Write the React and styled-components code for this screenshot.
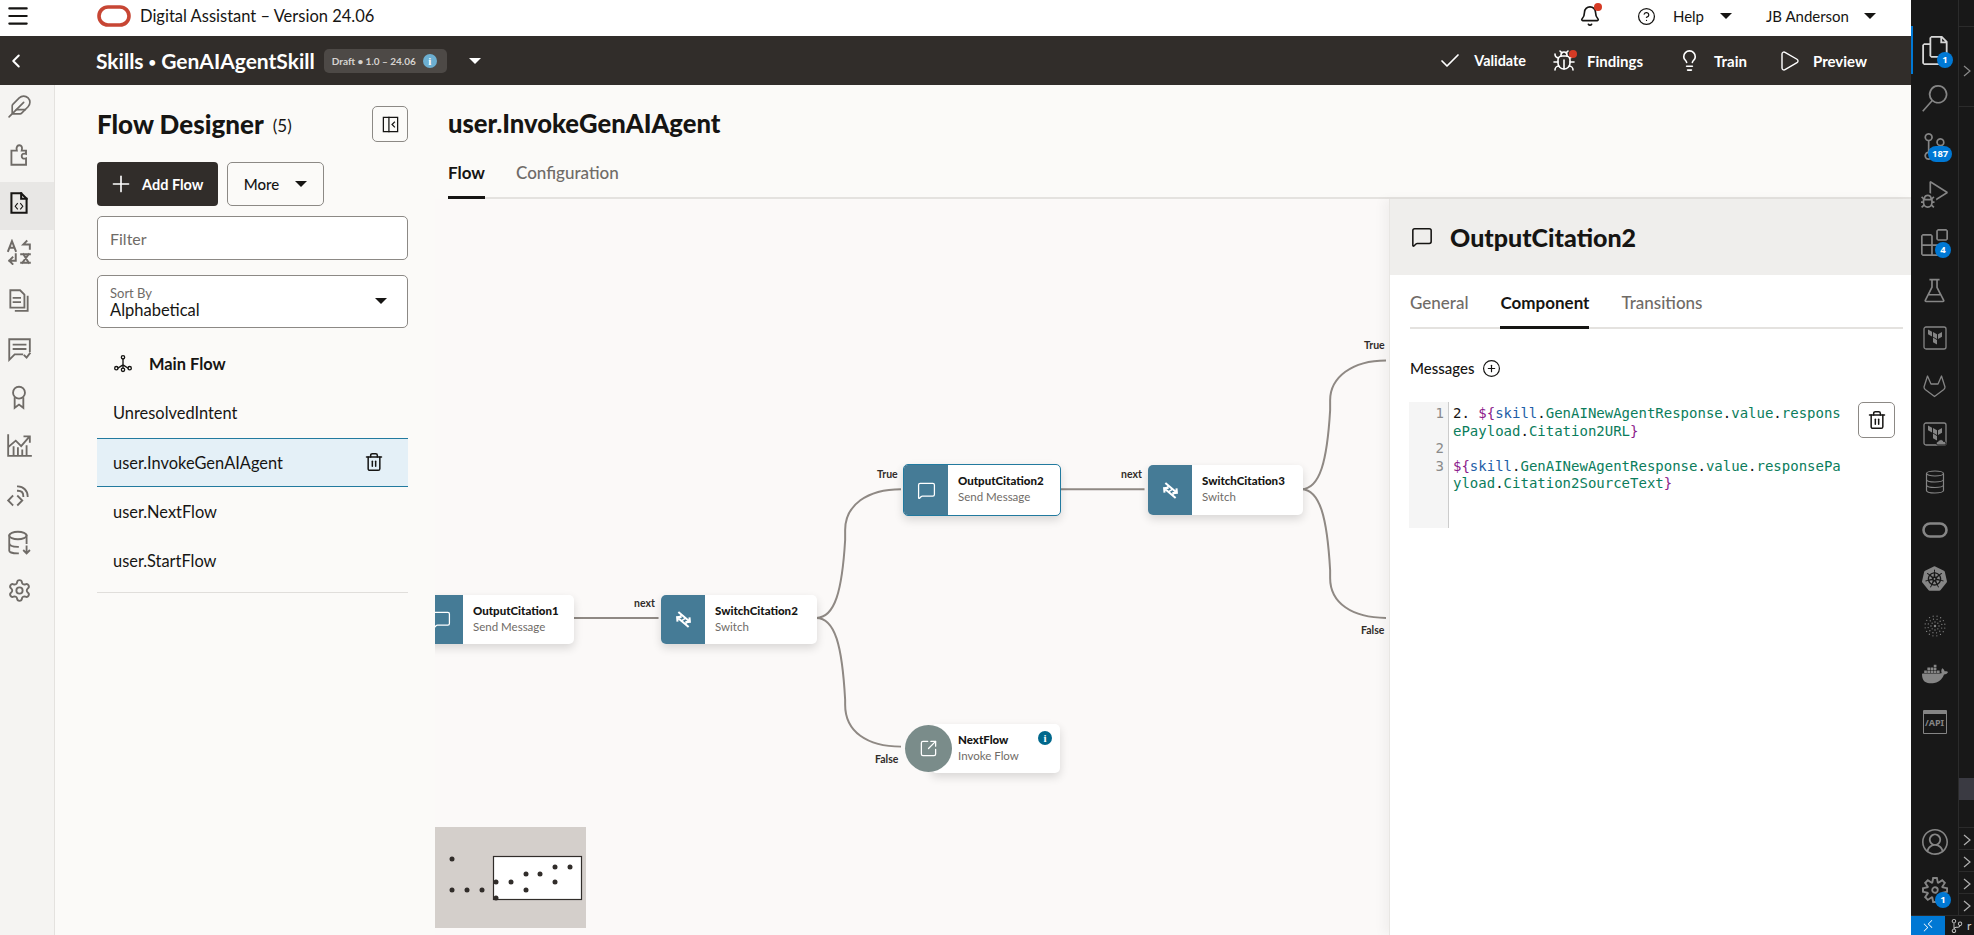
import React from 'react';
import styled, { createGlobalStyle } from 'styled-components';
import {
  Menu, ChevronLeft, Check, Bug, Lightbulb, Play, Bell, CircleHelp, Plus, Feather, Settings,
  Trash2, MessageSquare, SquareArrowOutUpRight, CirclePlus,
} from 'lucide-react';
import {
  VscFiles, VscSearch, VscSourceControl, VscDebugAlt, VscExtensions, VscBeaker, VscAccount,
  VscSettingsGear, VscRemote,
} from 'react-icons/vsc';
import { SiKubernetes, SiDocker } from 'react-icons/si';

const GlobalStyle = createGlobalStyle`
  html, body { margin: 0; padding: 0; height: 100%; overflow: hidden; }
  body { font-family: Lato, "Noto Sans", sans-serif; color: #161513; background: #fbf9f8; }
  * { box-sizing: border-box; }
`;

// canvas origin in page coordinates
const OX = 435;
const OY = 199;

const Page = styled.div`
  display: flex;
  width: 1974px;
  height: 935px;
  overflow: hidden;
`;

const AppArea = styled.div`
  width: 1913px;
  display: flex;
  flex-direction: column;
  background: #fbfaf8;
`;

/* top header */
const Header = styled.header`
  height: 36px;
  flex: none;
  background: #fff;
  display: flex;
  align-items: center;
  padding: 0 35px 4px 0;
`;

const MenuSlot = styled.div`
  width: 97px;
  padding-left: 5px;
  display: flex;
  align-items: center;
`;

const AppTitle = styled.span`
  margin-left: 9px;
  font-size: 16.5px;
  color: #161513;
`;

const HeaderRight = styled.div`
  margin-left: auto;
  display: flex;
  align-items: center;
`;

const BellWrap = styled.div`
  position: relative;
  display: flex;
  margin-right: 36px;
`;

const RedDot = styled.span`
  position: absolute;
  top: ${p => p.$top}px;
  right: ${p => p.$right}px;
  width: 8px;
  height: 8px;
  border-radius: 50%;
  background: #d63b25;
`;

const HeaderLabel = styled.span`
  font-size: 15px;
  margin-left: ${p => p.$ml || 0}px;
`;

const Caret = styled.span`
  display: inline-block;
  width: 0;
  height: 0;
  border-left: 6px solid transparent;
  border-right: 6px solid transparent;
  border-top: 6px solid ${p => p.$color || '#161513'};
  margin-left: ${p => p.$ml || 0}px;
`;

/* dark nav bar */
const NavBar = styled.div`
  height: 49px;
  flex: none;
  background: #312d2a;
  color: #fff;
  display: flex;
  align-items: center;
  padding-right: 44px;
`;

const BackSlot = styled.div`
  width: 96px;
  padding-left: 5px;
  display: flex;
`;

const SkillTitle = styled.span`
  font-size: 21px;
  font-weight: 700;
  i {
    font-style: normal;
    font-size: 13px;
    margin: 0 5px;
    position: relative;
    top: -2px;
  }
`;

const DraftBadge = styled.div`
  margin-left: 9px;
  width: 123px;
  height: 24px;
  border-radius: 5px;
  background: #4d4946;
  color: #d6d3d0;
  font-size: 10px;
  font-weight: 700;
  display: flex;
  align-items: center;
  gap: 7px;
  padding-left: 8px;
`;

const InfoDot = styled.span`
  width: 14px;
  height: 14px;
  border-radius: 50%;
  background: ${p => p.$bg || '#6cafd1'};
  color: #fff;
  font-size: 11px;
  font-weight: 700;
  display: flex;
  align-items: center;
  justify-content: center;
  font-family: "Liberation Serif", serif;
`;

const NavActions = styled.div`
  margin-left: auto;
  display: flex;
  align-items: center;
`;

const NavAction = styled.div`
  display: flex;
  align-items: center;
  gap: ${p => p.$gap}px;
  margin-left: ${p => p.$ml}px;
  font-size: 15px;
  font-weight: 700;
  position: relative;
`;

const ValidateLabel = styled.span`
  font-size: 14.4px;
`;

/* body */
const Body = styled.div`
  flex: 1;
  display: flex;
  min-height: 0;
`;

const Rail = styled.nav`
  width: 55px;
  flex: none;
  background: #f5f4f2;
  border-right: 1px solid #e4e2df;
`;

const RailItem = styled.div`
  height: 48.4px;
  display: flex;
  align-items: center;
  justify-content: center;
  padding: 0 16px 5px 0;
  color: ${p => (p.$active ? '#161513' : '#6f6b67')};
  background: ${p => (p.$active ? '#e8e7e5' : 'transparent')};
`;

const FlowPanel = styled.aside`
  width: 380px;
  flex: none;
  padding: 21px 27px 0 42px;
`;

const PanelHead = styled.div`
  display: flex;
  align-items: center;
  justify-content: space-between;
  height: 36px;
  margin-bottom: 20px;
`;

const PanelTitle = styled.h2`
  margin: 0;
  font-size: 26px;
  font-weight: 900;
  span {
    font-size: 17px;
    font-weight: 400;
    margin-left: 9px;
    position: relative;
    top: -2px;
  }
`;

const OutlineButton = styled.button`
  width: ${p => p.$w}px;
  height: ${p => p.$h}px;
  border: 1px solid #8c8985;
  border-radius: 5px;
  background: ${p => p.$bg || 'transparent'};
  padding: 0;
  display: flex;
  align-items: center;
  justify-content: center;
  color: #161513;
  font-family: inherit;
`;

const ButtonRow = styled.div`
  display: flex;
  gap: 9px;
  margin-bottom: 10px;
`;

const AddFlowButton = styled.button`
  width: 121px;
  height: 44px;
  border: 0;
  border-radius: 4px;
  background: #312d2a;
  color: #fff;
  font-family: inherit;
  font-size: 14.5px;
  font-weight: 700;
  display: flex;
  align-items: center;
  gap: 8px;
  padding: 0 0 0 11px;
`;

const MoreButton = styled(OutlineButton)`
  font-size: 15px;
  font-weight: 500;
  gap: 16px;
`;

const FilterBox = styled.div`
  height: 44px;
  border: 1px solid #8c8985;
  border-radius: 5px;
  background: #fff;
  padding-left: 12px;
  display: flex;
  align-items: center;
  font-size: 16px;
  color: #6f6b67;
  margin-bottom: 15px;
`;

const SortBox = styled.div`
  height: 53px;
  border: 1px solid #8c8985;
  border-radius: 5px;
  background: #fff;
  padding: 11px 20px 0 12px;
  position: relative;
  margin-bottom: 11px;
  small { display: block; font-size: 13px; line-height: 13px; color: #6f6b67; }
  b { display: block; font-weight: 400; font-size: 16.5px; line-height: 20px; }
`;

const SortCaret = styled(Caret)`
  position: absolute;
  right: 20px;
  top: 22px;
`;

const FlowRow = styled.div`
  height: 49.3px;
  display: flex;
  align-items: center;
  justify-content: space-between;
  padding: 0 24px 0 16px;
  font-size: 16.4px;
  font-weight: ${p => (p.$main ? 700 : 400)};
  ${p => p.$selected && `
    background: #e4f0f7;
    border-top: 1px solid #227a9f;
    border-bottom: 1px solid #227a9f;
  `}
`;

const MainRowLabel = styled.div`
  display: flex;
  align-items: center;
  gap: 16px;
`;

const ListDivider = styled.div`
  height: 1px;
  background: #e0dedb;
  margin-top: 7px;
`;

const MainArea = styled.main`
  flex: 1;
  min-width: 0;
  display: flex;
  flex-direction: column;
`;

const MainHead = styled.div`
  padding: 20px 0 0 13px;
  height: 114px;
  flex: none;
`;

const FlowTitle = styled.h1`
  margin: 0;
  font-size: 25.6px;
  font-weight: 900;
  line-height: 36px;
`;

const TabBar = styled.div`
  display: flex;
  gap: ${p => p.$gap}px;
  border-bottom: 2px solid #e4e2df;
  margin-top: ${p => p.$mt}px;
  height: ${p => p.$h}px;
`;

const Tab = styled.div`
  font-size: 17px;
  font-weight: ${p => (p.$active ? 700 : 500)};
  color: ${p => (p.$active ? '#161513' : '#6f6b67')};
  height: ${p => p.$h}px;
  line-height: ${p => p.$lh}px;
  border-bottom: ${p => (p.$active ? '3px solid #161513' : '0')};
`;

const Workspace = styled.div`
  flex: 1;
  display: flex;
  min-height: 0;
`;

const Canvas = styled.div`
  flex: 1;
  position: relative;
  overflow: hidden;
  background: #fbf9f8;
`;

const Edges = styled.svg`
  position: absolute;
  inset: 0;
  width: 100%;
  height: 100%;
`;

const EdgeLabel = styled.span`
  position: absolute;
  left: ${p => p.$x - OX}px;
  top: ${p => p.$y - OY - 7}px;
  font-size: 10.5px;
  line-height: 14px;
  font-weight: 700;
  color: #312d2a;
`;

const Node = styled.div`
  position: absolute;
  left: ${p => p.$x - OX}px;
  top: ${p => p.$y - OY}px;
  width: ${p => p.$w}px;
  height: ${p => p.$h}px;
  display: flex;
  background: #fff;
  border-radius: 5px;
  overflow: hidden;
  box-shadow: 0 4px 10px rgba(0, 0, 0, 0.14);
  ${p => p.$selected && 'border: 1.5px solid #227a9f;'}
`;

const NodeIcon = styled.div`
  width: 44px;
  flex: none;
  background: #457b96;
  color: #fff;
  display: flex;
  align-items: center;
  justify-content: center;
`;

const NodeText = styled.div`
  padding: ${p => (p.$round ? '8px 0 0 27px' : '8px 0 0 10px')};
  b { display: block; font-size: 11.5px; line-height: 15px; font-weight: 900; }
  span { display: block; font-size: 11.5px; line-height: 15px; color: #6f6b67; margin-top: 1px; }
`;

const RoundBadge = styled.div`
  position: absolute;
  left: ${p => p.$x - OX}px;
  top: ${p => p.$y - OY}px;
  width: 47px;
  height: 47px;
  border-radius: 50%;
  background: #7a8c8a;
  color: #fff;
  display: flex;
  align-items: center;
  justify-content: center;
`;

const NodeInfo = styled(InfoDot)`
  position: absolute;
  right: 8px;
  top: 7px;
`;

const Minimap = styled.svg`
  position: absolute;
  left: 0;
  bottom: 7px;
  width: 151px;
  height: 101px;
`;

const Drawer = styled.section`
  width: 522px;
  flex: none;
  background: #fff;
  border-left: 1px solid #e8e6e3;
  box-shadow: -6px 0 10px rgba(0, 0, 0, 0.04);
  position: relative;
`;

const DrawerHead = styled.div`
  height: 76px;
  background: #efeeec;
  display: flex;
  align-items: center;
  gap: 17px;
  padding-left: 21px;
`;

const DrawerTitle = styled.h2`
  margin: 0;
  font-size: 25px;
  font-weight: 900;
`;

const DrawerTabs = styled.div`
  margin: 0 8px 0 20px;
`;

const MessagesLabel = styled.div`
  display: flex;
  align-items: center;
  gap: 8px;
  font-size: 15px;
  font-weight: 500;
  margin: 28px 0 0 20px;
  height: 22px;
`;

const EditorRow = styled.div`
  display: flex;
  justify-content: space-between;
  padding: 0 16px 0 19px;
  margin-top: 23px;
`;

const Editor = styled.div`
  display: flex;
  width: 442px;
  height: 126px;
  font-family: "DejaVu Sans Mono", "Liberation Mono", monospace;
  font-size: 14px;
  line-height: 17.6px;
`;

const Gutter = styled.div`
  width: 40px;
  flex: none;
  background: #f5f5f5;
  border-right: 1px solid #ccc;
  color: #8a8a8a;
  text-align: right;
  padding: 3px 4px 0 0;
  white-space: pre;
`;

const CodeBody = styled.div`
  padding: 3px 0 0 4px;
  white-space: pre;
`;

const Sy = styled.span`color: #8b1a8b;`;
const Sk = styled.span`color: #1f5ea8;`;
const Pr = styled.span`color: #0b7d5c;`;

/* vs code strip on the right */
const VsCode = styled.div`
  flex: 1;
  background: #181818;
  display: flex;
  flex-direction: column;
  position: relative;
`;

const VsColumns = styled.div`
  flex: 1;
  display: flex;
  min-height: 0;
`;

const ActivityBar = styled.div`
  width: 48px;
  flex: none;
  padding-top: 26px;
  display: flex;
  flex-direction: column;
  border-right: 1px solid #2b2b2b;
  color: #858585;
`;

const ActivityItem = styled.div`
  height: 48px;
  flex: none;
  display: flex;
  align-items: center;
  justify-content: center;
  position: relative;
  color: ${p => (p.$active ? '#d7d7d7' : 'inherit')};
  ${p => p.$active && 'border-left: 2px solid #0078d4;'}
`;

const ActivityBottom = styled.div`
  margin-top: auto;
  padding-bottom: 1px;
`;

const Count = styled.span`
  position: absolute;
  left: ${p => p.$left}px;
  top: ${p => p.$top}px;
  min-width: 16px;
  height: 16px;
  padding: 0 4px;
  border-radius: 8px;
  background: #0078d4;
  color: #fff;
  font-family: "Noto Sans", sans-serif;
  font-size: 9.5px;
  font-weight: 700;
  line-height: 16px;
  text-align: center;
`;

const SideColumn = styled.div`
  flex: 1;
  display: flex;
  flex-direction: column;
  color: #8a8a8a;
`;

const SideTop = styled.div`
  height: 81px;
  margin-top: 26px;
  border-top: 1px solid #2b2b2b;
  border-bottom: 1px solid #2b2b2b;
  padding: 35px 0 0 3px;
`;

const SideThumb = styled.div`
  height: 22px;
  margin-top: 671px;
  background: #3a3a42;
`;

const SideRows = styled.div`
  margin-top: 27px;
`;

const SideRow = styled.div`
  height: 22px;
  border-top: 1px solid #2b2b2b;
  padding: 3px 0 0 3px;
  color: #b0b0b0;
`;

const StatusBar = styled.div`
  height: 20px;
  flex: none;
  display: flex;
  align-items: center;
  background: #181818;
  border-top: 1px solid #2b2b2b;
  color: #ccc;
  font-size: 12px;
  overflow: hidden;
`;

const RemoteChip = styled.div`
  width: 34px;
  height: 100%;
  background: #0078d4;
  color: #fff;
  display: flex;
  align-items: center;
  justify-content: center;
  flex: none;
  margin-right: 5px;
`;

const ApiTile = styled.div`
  width: 24px;
  height: 24px;
  border: 1.5px solid #858585;
  border-top-width: 4px;
  border-radius: 1px;
  color: #858585;
  font-family: "Noto Sans", sans-serif;
  font-size: 9px;
  font-weight: 700;
  line-height: 18px;
  text-align: center;
`;

const Stroke = ({ size = 24, children, sw = 1.7 }) => (
  <svg width={size} height={size} viewBox="0 0 24 24" fill="none" stroke="currentColor" strokeWidth={sw} strokeLinecap="square">
    {children}
  </svg>
);

const OracleLogo = () => (
  <svg width="34" height="22" viewBox="0 0 34 22">
    <rect x="2" y="2" width="30" height="18" rx="9" fill="none" stroke="#c74634" strokeWidth="3.6" />
  </svg>
);

const CollapseIcon = () => (
  <Stroke size={19} sw={1.6}>
    <rect x="3" y="3" width="18" height="18" />
    <path d="M10 3v18M17 9l-3 3 3 3" />
  </Stroke>
);

const PuzzleIcon = () => (
  <Stroke size={26}>
    <path d="M5 21V8h5c-1-4 1-5 2.5-5s3 1.5 2 5h4v3c-3-1-4 .5-4 2s1 3 4 2v6z" />
  </Stroke>
);

const FileCodeIcon = () => (
  <Stroke size={26} sw={1.9}>
    <path d="M5 3h9l5 5v13H5z" />
    <path d="M14 3v5h5" />
    <path d="M10.5 12.5L8.5 15l2 2.5M13.5 12.5l2 2.5-2 2.5" strokeWidth="1" />
  </Stroke>
);

const TranslateIcon = () => (
  <Stroke size={26} sw={1.8}>
    <path d="M2 11l3.5-9L9 11M3.5 8h4" />
    <path d="M19 2l-3 3h6v4" />
    <path d="M9 14v6H3M6 17l-3 3 3 3" />
    <path d="M14 14h8M15 22l6-8M16 14l5 8M14 22h8" />
  </Stroke>
);

const DocsIcon = () => (
  <Stroke size={26}>
    <path d="M4 3h9l4 4v12H4z" />
    <path d="M7 10h6M7 14h6" />
    <path d="M20 9v13H9" />
  </Stroke>
);

const ReviewIcon = () => (
  <Stroke size={26}>
    <path d="M22 14V3H3v19l5-5h7" />
    <path d="M7 8h11M7 12h11" />
    <path d="M17 18l2 2 3-4" />
  </Stroke>
);

const AwardIcon = () => (
  <Stroke size={26}>
    <circle cx="12" cy="8" r="5.5" />
    <path d="M8 13v9l4-3 4 3v-9" />
  </Stroke>
);

const ChartIcon = () => (
  <Stroke size={26}>
    <path d="M2 3v19h21" />
    <path d="M3 13l6-5 5 5 7-8M17 4h5v5" />
    <path d="M7 21v-7M11 21v-6M15 21v-4M19 21v-8" />
  </Stroke>
);

const CodeSignalIcon = () => (
  <Stroke size={26}>
    <path d="M6 14l-4 4 4 4M11 14l4 4-4 4" />
    <path d="M11 5c5 0 9 4 9 9M11 9c3 0 5 2 5 5" />
  </Stroke>
);

const DbDownIcon = () => (
  <Stroke size={26}>
    <ellipse cx="11" cy="6" rx="8" ry="3.5" />
    <path d="M3 6v14c0 1 2 2.5 8 2.5M19 6v7M3 13c0 2 3 3.5 8 3.5" />
    <path d="M19 16v6M16.5 20l2.5 2.5 2.5-2.5" />
  </Stroke>
);

const TreeIcon = () => (
  <Stroke size={20} sw={1.6}>
    <circle cx="12" cy="4" r="2" />
    <circle cx="12" cy="19" r="2" />
    <circle cx="4" cy="17" r="2" />
    <circle cx="20" cy="17" r="2" />
    <path d="M12 6v11M6 17l6-4 6 4" />
  </Stroke>
);

const SwitchIcon = () => (
  <svg width="19" height="19" viewBox="0 0 24 24" fill="none" stroke="#fff" strokeWidth="2.6">
    <g transform="rotate(40 12 12)">
      <path d="M1 9h19M16 5l4 4-4 4" />
      <path d="M23 15H4M8 11l-4 4 4 4" />
      <path d="M7 9l-2 6M13 9l-2 6M19 9l-2 6" strokeWidth="1.8" />
    </g>
  </svg>
);

const GitlabOutline = () => (
  <svg width="25" height="24" viewBox="0 0 25 24" fill="none" stroke="#858585" strokeWidth="1.3" strokeLinejoin="round">
    <path d="M2 13L5.5 2l3.5 8h7l3.5-8L23 13c0 1-.5 2-1.5 2.8L12.5 22.5 3.5 15.8C2.5 15 2 14 2 13z" />
  </svg>
);

const TerraformBox = ({ cloud }) => (
  <svg width="24" height="24" viewBox="0 0 24 24" fill="none">
    <rect x="1" y="1" width="22" height="22" rx="2" stroke="#858585" strokeWidth="1.3" />
    <path fill="#858585" d="M10 6l4 2.3v4.7l-4-2.3zM15 8.3l4-2.3v4.700l-4 2.3zM5 3.5l4 2.3v4.700L5 8.200zM10 11.600l4 2.3v4.700l-4-2.3z" />
    {cloud && <path fill="#858585" stroke="#181818" strokeWidth="1" d="M15 23c-2 0-2.5-3 0-3.5 1-2.5 5-2.5 5.5 0 3-.5 3.500 3.500.5 3.500z" />}
  </svg>
);

const DotsBurst = () => {
  const dots = [];
  [4, 7, 10].forEach((r, ring) => {
    const n = 8 + ring * 4;
    for (let i = 0; i < n; i++) {
      const a = (i / n) * Math.PI * 2 + ring * 0.3;
      dots.push(<circle key={`${ring}-${i}`} cx={12 + r * Math.cos(a)} cy={12 + r * Math.sin(a)} r="0.65" fill="#858585" />);
    }
  });
  return <svg width="24" height="24" viewBox="0 0 24 24"><circle cx="12" cy="12" r="1.2" fill="#858585" />{dots}</svg>;
};

const OraclePill = () => (
  <svg width="26" height="16" viewBox="0 0 26 16">
    <rect x="1.5" y="1.5" width="23" height="13" rx="6.5" fill="none" stroke="#858585" strokeWidth="2.6" />
  </svg>
);

const DbStack = () => (
  <svg width="20" height="24" viewBox="0 0 20 24" fill="none" stroke="#858585" strokeWidth="1.2">
    <ellipse cx="10" cy="3.5" rx="8.5" ry="2.5" />
    <path d="M1.5 3.5v17c0 1.4 3.800 2.5 8.500 2.5s8.500-1.100 8.500-2.500v-17M1.500 9.500c0 1.400 3.800 2.500 8.500 2.500s8.500-1.100 8.500-2.500M1.500 15c0 1.400 3.800 2.500 8.500 2.500s8.500-1.100 8.500-2.500" />
  </svg>
);

const SmallChevron = () => (
  <svg width="12" height="14" viewBox="0 0 12 14" fill="none" stroke="currentColor" strokeWidth="1.2"><path d="M2 2l6 5-6 5" /></svg>
);

const MINIMAP_DOTS = [
  [452, 859], [452, 890], [467, 890], [482, 890], [496, 882], [511, 882], [526, 874],
  [540, 874], [555, 867], [570, 867], [555, 882], [526, 890], [496, 898],
];

const railIcons = [
  <Feather size={25} strokeWidth={1.6} />, <PuzzleIcon />, <FileCodeIcon />, <TranslateIcon />, <DocsIcon />,
  <ReviewIcon />, <AwardIcon />, <ChartIcon />, <CodeSignalIcon />, <DbDownIcon />,
  <Settings size={25} strokeWidth={1.8} />,
];

const Code = () => (
  <CodeBody>
    <div>2. <Sy>{'${'}</Sy><Sk>skill</Sk>.<Pr>GenAINewAgentResponse</Pr>.<Pr>value</Pr>.<Pr>respons</Pr></div>
    <div><Pr>ePayload</Pr>.<Pr>Citation2URL</Pr><Sy>{'}'}</Sy></div>
    <div>{' '}</div>
    <div><Sy>{'${'}</Sy><Sk>skill</Sk>.<Pr>GenAINewAgentResponse</Pr>.<Pr>value</Pr>.<Pr>responsePa</Pr></div>
    <div><Pr>yload</Pr>.<Pr>Citation2SourceText</Pr><Sy>{'}'}</Sy></div>
  </CodeBody>
);

export default function App() {
  return (
    <Page>
      <GlobalStyle />
      <AppArea>
        <Header>
          <MenuSlot><Menu size={26} strokeWidth={2} /></MenuSlot>
          <OracleLogo />
          <AppTitle>Digital Assistant – Version 24.06</AppTitle>
          <HeaderRight>
            <BellWrap>
              <Bell size={22} strokeWidth={1.8} />
              <RedDot $top={-2} $right={-1} />
            </BellWrap>
            <CircleHelp size={19} strokeWidth={1.6} />
            <HeaderLabel $ml={17}>Help</HeaderLabel>
            <Caret $ml={16} />
            <HeaderLabel $ml={34}>JB Anderson</HeaderLabel>
            <Caret $ml={15} />
          </HeaderRight>
        </Header>

        <NavBar>
          <BackSlot><ChevronLeft size={22} strokeWidth={2.2} /></BackSlot>
          <SkillTitle>Skills<i>•</i>GenAIAgentSkill</SkillTitle>
          <DraftBadge>Draft • 1.0 – 24.06 <InfoDot>i</InfoDot></DraftBadge>
          <Caret $ml={22} $color="#fff" />
          <NavActions>
            <NavAction $gap={12} $ml={0}><Check size={24} strokeWidth={1.7} /><ValidateLabel>Validate</ValidateLabel></NavAction>
            <NavAction $gap={11} $ml={26}>
              <Bug size={24} strokeWidth={1.6} />Findings
              <RedDot $top={1} $right={66} />
            </NavAction>
            <NavAction $gap={13} $ml={35}><Lightbulb size={23} strokeWidth={1.7} />Train</NavAction>
            <NavAction $gap={12} $ml={30}><Play size={24} strokeWidth={1.4} />Preview</NavAction>
          </NavActions>
        </NavBar>

        <Body>
          <Rail>
            {railIcons.map((icon, i) => <RailItem key={i} $active={i === 2}>{icon}</RailItem>)}
          </Rail>

          <FlowPanel>
            <PanelHead>
              <PanelTitle>Flow Designer<span>(5)</span></PanelTitle>
              <OutlineButton $w={36} $h={36}><CollapseIcon /></OutlineButton>
            </PanelHead>
            <ButtonRow>
              <AddFlowButton><Plus size={26} strokeWidth={1.5} />Add Flow</AddFlowButton>
              <MoreButton $w={97} $h={44}>More<Caret /></MoreButton>
            </ButtonRow>
            <FilterBox>Filter</FilterBox>
            <SortBox>
              <small>Sort By</small>
              <b>Alphabetical</b>
              <SortCaret />
            </SortBox>
            <FlowRow $main>
              <MainRowLabel><TreeIcon />Main Flow</MainRowLabel>
            </FlowRow>
            <FlowRow>UnresolvedIntent</FlowRow>
            <FlowRow $selected>user.InvokeGenAIAgent<Trash2 size={20} strokeWidth={1.8} /></FlowRow>
            <FlowRow>user.NextFlow</FlowRow>
            <FlowRow>user.StartFlow</FlowRow>
            <ListDivider />
          </FlowPanel>

          <MainArea>
            <MainHead>
              <FlowTitle>user.InvokeGenAIAgent</FlowTitle>
              <TabBar $gap={31} $mt={20} $h={38}>
                <Tab $active $h={38} $lh={24}>Flow</Tab>
                <Tab $h={38} $lh={24}>Configuration</Tab>
              </TabBar>
            </MainHead>

            <Workspace>
              <Canvas>
                <Edges viewBox={`${OX} ${OY} 956 736`} fill="none" stroke="#8f8984" strokeWidth="2">
                  <path d="M574 618H659" />
                  <path d="M817 618C836 618 843 590 846 540V530C846 505 868 489 902 489" />
                  <path d="M817 618C836 618 843 646 846 700V705C846 732 868 747 902 747" />
                  <path d="M1060 489H1146" />
                  <path d="M1303 489C1322 489 1329 460 1332 410V400C1332 377 1354 360 1388 360" />
                  <path d="M1303 489C1322 489 1329 518 1332 570V578C1332 603 1354 618 1388 618" />
                </Edges>

                <EdgeLabel $x={634} $y={603}>next</EdgeLabel>
                <EdgeLabel $x={877} $y={474}>True</EdgeLabel>
                <EdgeLabel $x={875} $y={759}>False</EdgeLabel>
                <EdgeLabel $x={1121} $y={474}>next</EdgeLabel>
                <EdgeLabel $x={1364} $y={345}>True</EdgeLabel>
                <EdgeLabel $x={1361} $y={630}>False</EdgeLabel>

                <Node $x={419} $y={595} $w={155} $h={49}>
                  <NodeIcon><MessageSquare size={19} strokeWidth={1.6} /></NodeIcon>
                  <NodeText><b>OutputCitation1</b><span>Send Message</span></NodeText>
                </Node>
                <Node $x={661} $y={595} $w={156} $h={49}>
                  <NodeIcon><SwitchIcon /></NodeIcon>
                  <NodeText><b>SwitchCitation2</b><span>Switch</span></NodeText>
                </Node>
                <Node $x={903} $y={464} $w={158} $h={52} $selected>
                  <NodeIcon><MessageSquare size={19} strokeWidth={1.6} /></NodeIcon>
                  <NodeText><b>OutputCitation2</b><span>Send Message</span></NodeText>
                </Node>
                <Node $x={1148} $y={465} $w={155} $h={50}>
                  <NodeIcon><SwitchIcon /></NodeIcon>
                  <NodeText><b>SwitchCitation3</b><span>Switch</span></NodeText>
                </Node>
                <Node $x={931} $y={724} $w={129} $h={49}>
                  <NodeText $round><b>NextFlow</b><span>Invoke Flow</span></NodeText>
                  <NodeInfo $bg="#00688c">i</NodeInfo>
                </Node>
                <RoundBadge $x={905} $y={725}><SquareArrowOutUpRight size={19} strokeWidth={1.6} /></RoundBadge>

                <Minimap viewBox="435 827 151 101">
                  <rect x="435" y="827" width="151" height="101" fill="#d4cfcb" />
                  <rect x="493.5" y="856.5" width="88" height="43" fill="#fff" stroke="#312d2a" strokeWidth="1.2" />
                  {MINIMAP_DOTS.map(([x, y]) => <circle key={`${x}-${y}`} cx={x} cy={y} r="2.5" fill="#312d2a" />)}
                </Minimap>
              </Canvas>

              <Drawer>
                <DrawerHead>
                  <MessageSquare size={22} strokeWidth={1.7} />
                  <DrawerTitle>OutputCitation2</DrawerTitle>
                </DrawerHead>
                <DrawerTabs>
                  <TabBar $gap={32} $mt={0} $h={54}>
                    <Tab $h={54} $lh={56}>General</Tab>
                    <Tab $active $h={54} $lh={56}>Component</Tab>
                    <Tab $h={54} $lh={56}>Transitions</Tab>
                  </TabBar>
                </DrawerTabs>
                <MessagesLabel>Messages <CirclePlus size={19} strokeWidth={1.5} /></MessagesLabel>
                <EditorRow>
                  <Editor>
                    <Gutter>{'1\n\n2\n3'}</Gutter>
                    <Code />
                  </Editor>
                  <OutlineButton $w={37} $h={36} $bg="#fff"><Trash2 size={20} strokeWidth={1.8} /></OutlineButton>
                </EditorRow>
              </Drawer>
            </Workspace>
          </MainArea>
        </Body>
      </AppArea>

      <VsCode>
        <VsColumns>
          <ActivityBar>
            <ActivityItem $active><VscFiles size={29} /><Count $left={24} $top={26}>1</Count></ActivityItem>
            <ActivityItem><VscSearch size={27} /></ActivityItem>
            <ActivityItem><VscSourceControl size={27} /><Count $left={17} $top={24}>187</Count></ActivityItem>
            <ActivityItem><VscDebugAlt size={27} /></ActivityItem>
            <ActivityItem><VscExtensions size={27} /><Count $left={24} $top={24}>4</Count></ActivityItem>
            <ActivityItem><VscBeaker size={27} /></ActivityItem>
            <ActivityItem><TerraformBox /></ActivityItem>
            <ActivityItem><GitlabOutline /></ActivityItem>
            <ActivityItem><TerraformBox cloud /></ActivityItem>
            <ActivityItem><DbStack /></ActivityItem>
            <ActivityItem><OraclePill /></ActivityItem>
            <ActivityItem><SiKubernetes size={25} /></ActivityItem>
            <ActivityItem><DotsBurst /></ActivityItem>
            <ActivityItem><SiDocker size={26} /></ActivityItem>
            <ActivityItem><ApiTile>/API</ApiTile></ActivityItem>
            <ActivityBottom>
              <ActivityItem><VscAccount size={26} /></ActivityItem>
              <ActivityItem><VscSettingsGear size={26} /><Count $left={24} $top={26}>1</Count></ActivityItem>
            </ActivityBottom>
          </ActivityBar>
          <SideColumn>
            <SideTop><SmallChevron /></SideTop>
            <SideThumb />
            <SideRows>
              {[0, 1, 2, 3].map(i => <SideRow key={i}><SmallChevron /></SideRow>)}
            </SideRows>
          </SideColumn>
        </VsColumns>
        <StatusBar>
          <RemoteChip><VscRemote size={14} /></RemoteChip>
          <VscSourceControl size={14} />
          <span>&nbsp;r</span>
        </StatusBar>
      </VsCode>
    </Page>
  );
}
